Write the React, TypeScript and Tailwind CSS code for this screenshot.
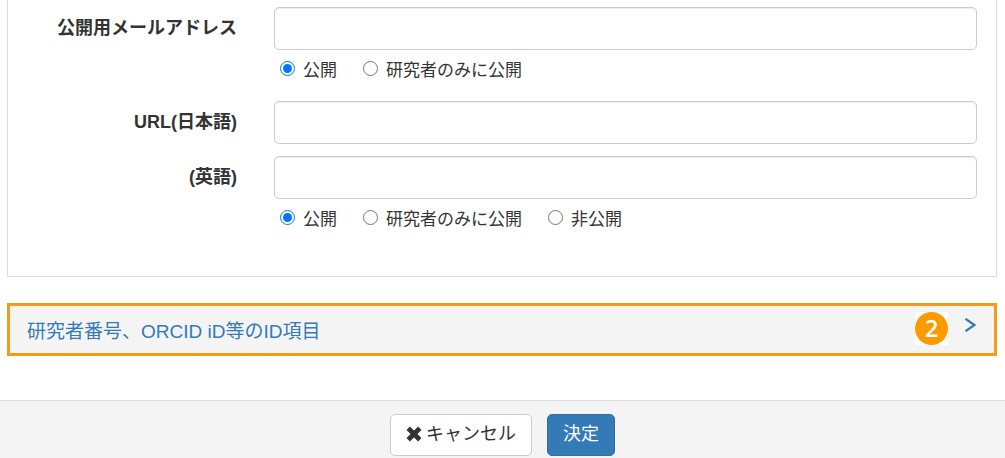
import { useState } from "react";

const inputClass =
  "block h-[43px] w-full rounded-[5px] border border-[#ccc] bg-white px-4 text-lg shadow-[inset_0_1px_1px_rgba(0,0,0,0.075)] outline-none focus:border-[#66afe9]";
const labelClass = "w-[229px] shrink-0 pt-[9px] text-right font-bold";

function VisibilityOptions({ name, options }: { name: string; options: string[] }) {
  const [selected, setSelected] = useState(options[0]);
  return (
    <div role="radiogroup" aria-label="公開設定" className="flex gap-[26px] pt-[9px] pl-1.5 text-[17px]">
      {options.map((option) => (
        <label key={option} className="flex items-start gap-2">
          <input
            type="radio"
            name={name}
            checked={selected === option}
            onChange={() => setSelected(option)}
            className="mt-0.5 size-[15px]"
          />
          {option}
        </label>
      ))}
    </div>
  );
}

export default function App() {
  return (
    <div className="flex min-h-screen flex-col bg-white font-['Liberation_Sans','Noto_Sans_CJK_JP',sans-serif] text-lg leading-6 text-[#333]">
      <main className="px-2 pb-11">
        <form className="-ml-px flex flex-col border-x border-b border-[#ddd] pt-[7px] pr-[19px] pb-11">
          <div className="flex gap-[37px]">
            <label htmlFor="email" className={labelClass}>公開用メールアドレス</label>
            <div className="flex-1">
              <input id="email" type="email" className={inputClass} />
              <VisibilityOptions name="email-visibility" options={["公開", "研究者のみに公開"]} />
            </div>
          </div>
          <div className="mt-[18px] flex gap-[37px]">
            <label htmlFor="url-ja" className={labelClass}>URL(日本語)</label>
            <div className="flex-1">
              <input id="url-ja" type="url" className={inputClass} />
            </div>
          </div>
          <div className="mt-3 flex gap-[37px]">
            <label htmlFor="url-en" className={labelClass}>(英語)</label>
            <div className="flex-1">
              <input id="url-en" type="url" className={inputClass} />
              <VisibilityOptions name="url-visibility" options={["公開", "研究者のみに公開", "非公開"]} />
            </div>
          </div>
        </form>

        <section className="mt-[26px] -ml-px flex h-[53px] items-center border-[3px] border-[#f39c1b] bg-[#f4f4f4] pr-[17px] pl-[17px]">
          <h2 className="flex-1 pt-1 text-[19px]">
            <a href="#researcher-ids" className="text-[#337ab7]">研究者番号、ORCID iD等のID項目</a>
          </h2>
          <span className="mr-4 mb-0.5 bg-white">
            <span className="flex size-[33px] items-center justify-center rounded-full bg-[#ff9900] pb-0.5 font-['Open_Sans',sans-serif] text-2xl font-semibold text-white">
              2
            </span>
          </span>
          <a href="#researcher-ids" aria-label="開く" className="mb-2.5">
            <svg viewBox="0 0 13 14" className="h-3.5 w-[13px]" fill="none" stroke="#337ab7" strokeWidth="2.2">
              <path d="M1.5 0.8 L10.5 7 L1.5 13.2" />
            </svg>
          </a>
        </section>
      </main>

      <footer className="flex flex-1 items-start justify-center gap-[15px] border-t border-[#ddd] bg-[#f4f4f4] pt-[13px]">
        <button type="button" className="flex h-[42px] items-center gap-1 rounded-[5px] border border-[#ccc] bg-white px-[15px] pb-0.5">
          <svg viewBox="0 0 16 16" className="size-4" fill="none" stroke="#333" strokeWidth="4.8">
            <path d="M2.2 2.2 L13.8 13.8 M13.8 2.2 L2.2 13.8" />
          </svg>
          キャンセル
        </button>
        <button type="submit" className="h-[42px] rounded-[5px] border border-[#2e6da4] bg-[#337ab7] px-[15px] pb-0.5 text-white">
          決定
        </button>
      </footer>
    </div>
  );
}
